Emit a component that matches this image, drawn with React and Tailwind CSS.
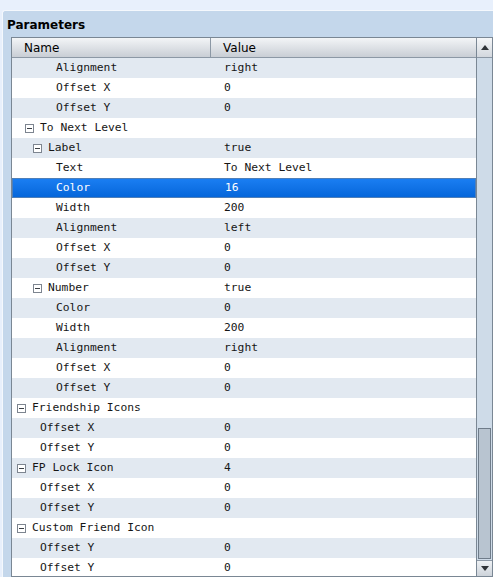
const rows = [
  { level: 3, name: 'Alignment', value: 'right' },
  { level: 3, name: 'Offset X', value: '0' },
  { level: 3, name: 'Offset Y', value: '0' },
  { level: 1, name: 'To Next Level', value: '', group: true },
  { level: 2, name: 'Label', value: 'true', group: true },
  { level: 3, name: 'Text', value: 'To Next Level' },
  { level: 3, name: 'Color', value: '16', selected: true },
  { level: 3, name: 'Width', value: '200' },
  { level: 3, name: 'Alignment', value: 'left' },
  { level: 3, name: 'Offset X', value: '0' },
  { level: 3, name: 'Offset Y', value: '0' },
  { level: 2, name: 'Number', value: 'true', group: true },
  { level: 3, name: 'Color', value: '0' },
  { level: 3, name: 'Width', value: '200' },
  { level: 3, name: 'Alignment', value: 'right' },
  { level: 3, name: 'Offset X', value: '0' },
  { level: 3, name: 'Offset Y', value: '0' },
  { level: 0, name: 'Friendship Icons', value: '', group: true },
  { level: 1, name: 'Offset X', value: '0' },
  { level: 1, name: 'Offset Y', value: '0' },
  { level: 0, name: 'FP Lock Icon', value: '4', group: true },
  { level: 1, name: 'Offset X', value: '0' },
  { level: 1, name: 'Offset Y', value: '0' },
  { level: 0, name: 'Custom Friend Icon', value: '', group: true },
  { level: 1, name: 'Offset Y', value: '0' },
  { level: 1, name: 'Offset Y', value: '0' },
];

const Collapse = () => (
  <span className="mr-[6px] flex h-[9px] w-[9px] items-center justify-center border border-[#7d8590] bg-white">
    <span className="h-px w-[5px] bg-[#3a3f45]" />
  </span>
);

const Row = ({ row, index }) => {
  const bg = row.selected
    ? 'bg-gradient-to-b from-[#1a7ef2] to-[#0566da] border border-[#4f7fb8] text-white'
    : index % 2 === 0
      ? 'bg-[#e2e9f1] text-[#161616]'
      : 'bg-white text-[#161616]';
  // text starts at 32 + 8*level from the table's edge; groups carry a 15px toggle
  const pad = 20 + row.level * 8 - (row.group ? 15 : 0);
  return (
    <div className={`flex h-[20px] shrink-0 items-center ${bg}`}>
      <div className="flex w-[199px] items-center" style={{ paddingLeft: pad + (row.selected ? -1 : 0) }}>
        {row.group && <Collapse />}
        <span>{row.name}</span>
      </div>
      <div className="pl-[13px]">{row.value}</div>
    </div>
  );
};

const Scrollbar = () => (
  <div className="flex w-[16px] flex-col border-l border-[#7a8794] bg-[#cedbe8]">
    <div className="flex h-[20px] items-center justify-center border-b border-[#8c98a5] bg-gradient-to-b from-[#f4f6f8] to-[#d3d8de]">
      <svg width="8" height="5" viewBox="0 0 8 5"><path d="M0 5 L4 0 L8 5 Z" fill="#2f3338" /></svg>
    </div>
    <div className="flex flex-1 flex-col justify-end pb-[1px]">
      <div className="mx-[1px] h-[131px] border border-[#6f7c8a] bg-[#b8c4d0]" />
    </div>
    <div className="flex h-[16px] items-center justify-center border-t border-[#8c98a5] bg-gradient-to-b from-[#eef1f4] to-[#cdd3da]">
      <svg width="8" height="5" viewBox="0 0 8 5"><path d="M0 0 L8 0 L4 5 Z" fill="#2f3338" /></svg>
    </div>
  </div>
);

export default function App() {
  return (
    <div className="h-[577px] w-[493px] overflow-hidden bg-[#e8f0fc]" style={{ fontFamily: '"DejaVu Sans", sans-serif' }}>
      <div className="ml-[2px] mt-[10px] h-[570px] rounded-tl-[3px] border-l border-t border-[#f4f8fd] bg-[#c4d7eb] pl-[8px]">
        <div className="flex h-[26px] items-center pt-[1px] text-[12px] font-bold text-black">
          <span className="-ml-[4px]">Parameters</span>
        </div>
        <div className="flex h-[540px] border border-[#7a8794] bg-white">
          <div className="flex min-w-0 flex-1 flex-col overflow-hidden">
            <div className="flex h-[20px] shrink-0 items-center border-b border-[#8c98a5] bg-gradient-to-b from-[#f3f5f7] to-[#c9ced5] text-[12px] text-black">
              <div className="h-full w-[199px] border-r border-[#8c98a5] pl-[12px] leading-[20px]">Name</div>
              <div className="pl-[12px] leading-[20px]">Value</div>
            </div>
            <div className="flex flex-col text-[11.3px]" style={{ fontFamily: '"DejaVu Sans Mono", monospace' }}>
              {rows.map((row, i) => (
                <Row key={i} row={row} index={i} />
              ))}
            </div>
          </div>
          <Scrollbar />
        </div>
      </div>
    </div>
  );
}
